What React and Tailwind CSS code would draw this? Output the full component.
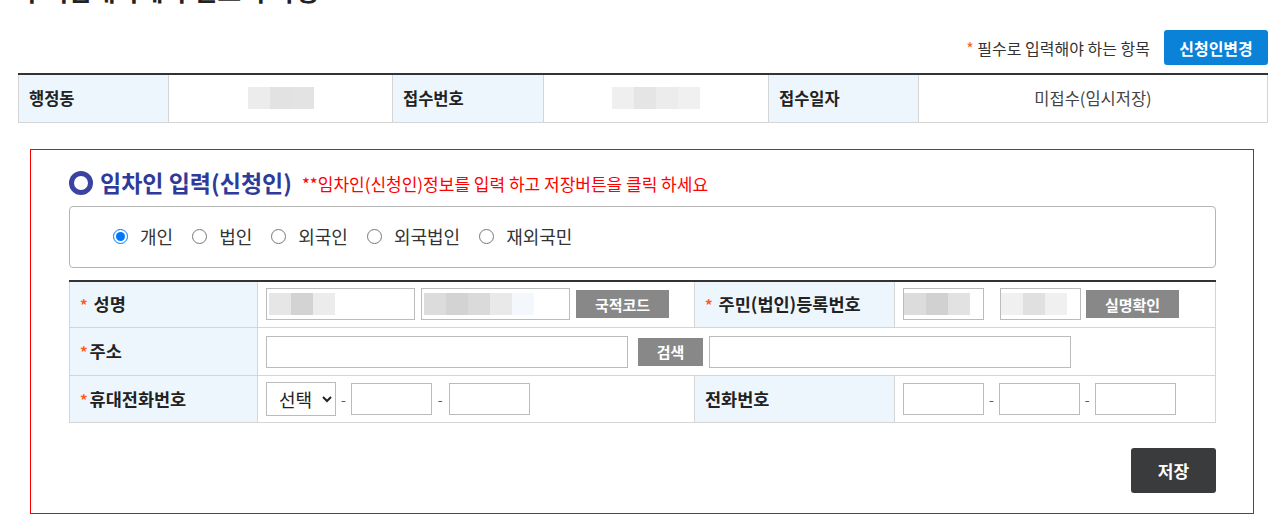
import { useState } from 'react';

const font = { fontFamily: '"Noto Sans CJK KR", "Noto Sans", sans-serif' };

function Blur({ shades }) {
  return (
    <div className="flex h-[22px]">
      {shades.map((c, i) => (
        <div key={i} className="w-[22px] h-[22px]" style={{ backgroundColor: c }} />
      ))}
    </div>
  );
}

function GrayBtn({ children, w }) {
  return (
    <button className={`h-[28px] ${w} bg-[#888888] text-white text-[15px] font-bold leading-none`}>
      {children}
    </button>
  );
}

function Star() {
  return <span className="text-[#ff5a1f] text-[15px] font-bold mr-[2px]">*</span>;
}

export default function App() {
  const [type, setType] = useState('개인');
  const types = ['개인', '법인', '외국인', '외국법인', '재외국민'];

  return (
    <div className="w-[1272px] h-[530px] overflow-hidden bg-white text-[#222]" style={font}>
      <div className="pl-[18px] pr-[4px]">
        <h2 className="mt-[-26px] h-[32px] text-[26px] font-bold text-[#222] leading-[32px] pl-[2px] whitespace-nowrap">
          주택임대차계약 신고서 작성
        </h2>

        <div className="flex items-center justify-end h-[35px] mt-[24px]">
          <span className="text-[16px] text-[#333]">
            <span className="text-[#ff5a1f]">*</span> 필수로 입력해야 하는 항목
          </span>
          <button className="ml-[14px] w-[104px] h-[35px] rounded-[3px] bg-[#0a82d8] text-white text-[16px] font-bold">
            신청인변경
          </button>
        </div>

        <table className="mt-[8px] w-full border-collapse border-t-2 border-t-[#333] text-[16.5px]">
          <tbody>
            <tr className="h-[48px]">
              <th className="w-[150px] bg-[#eef6fd] border border-[#d5d5d5] border-t-0 text-left pl-[10px] font-bold">행정동</th>
              <td className="w-[224px] border border-[#d5d5d5] border-t-0">
                <div className="flex justify-center"><Blur shades={['#ececec', '#e2e2e2', '#e3e3e3']} /></div>
              </td>
              <th className="w-[151px] bg-[#eef6fd] border border-[#d5d5d5] border-t-0 text-left pl-[10px] font-bold">접수번호</th>
              <td className="w-[225px] border border-[#d5d5d5] border-t-0">
                <div className="flex justify-center"><Blur shades={['#efefef', '#e5e5e5', '#ececec', '#f0f0f0']} /></div>
              </td>
              <th className="w-[150px] bg-[#eef6fd] border border-[#d5d5d5] border-t-0 text-left pl-[10px] font-bold">접수일자</th>
              <td className="border border-[#d5d5d5] border-t-0 text-center text-[#444]">미접수(임시저장)</td>
            </tr>
          </tbody>
        </table>
      </div>

      <div className="mt-[26px] ml-[30px] w-[1224px] h-[365px] border border-[#ff0000] pt-[18px] pl-[38px] pr-[37px]">
        <div className="flex items-center h-[30px]">
          <span className="w-[24px] h-[24px] rounded-full border-[5px] border-[#3a43a0]" />
          <span className="ml-[7px] text-[23px] font-bold text-[#2f3b9a]">임차인 입력(신청인)</span>
          <span className="ml-[10px] text-[17px] text-[#ff0000] mt-[3px]">**임차인(신청인)정보를 입력 하고 저장버튼을 클릭 하세요</span>
        </div>

        <div className="mt-[8px] h-[62px] border border-[#b5b5b5] rounded-[4px] flex items-center pl-[43px] gap-[19px] text-[18px] text-[#333]">
          {types.map((t) => (
            <label key={t} className="flex items-center">
              <input
                type="radio"
                name="type"
                checked={type === t}
                onChange={() => setType(t)}
                className="w-[15px] h-[15px] m-0 mr-[12px]"
              />
              {t}
            </label>
          ))}
        </div>

        <table className="mt-[12px] w-full border-collapse border-t-2 border-t-[#333] text-[17.5px]">
          <tbody>
            <tr className="h-[47px]">
              <th className="w-[188px] bg-[#eef6fd] border border-[#d5d5d5] border-t-0 text-left pl-[10px] font-bold">
                <Star /> 성명
              </th>
              <td className="w-[437px] border border-[#d5d5d5] border-t-0 pl-[8px]">
                <div className="flex items-center gap-[6px]">
                  <div className="w-[149px] h-[32px] border border-[#bbb] flex items-center pl-[2px]">
                    <Blur shades={['#e6e6e6', '#d2d3d2', '#ececec']} />
                  </div>
                  <div className="w-[149px] h-[32px] border border-[#bbb] flex items-center pl-[2px]">
                    <Blur shades={['#dcdcdc', '#d3d3d3', '#dadada', '#e9e9e9', '#f4f8fc']} />
                  </div>
                  <GrayBtn w="w-[93px]">국적코드</GrayBtn>
                </div>
              </td>
              <th className="w-[200px] bg-[#eef6fd] border border-[#d5d5d5] border-t-0 text-left pl-[10px] font-bold whitespace-nowrap">
                <Star /> 주민(법인)등록번호
              </th>
              <td className="border border-[#d5d5d5] border-t-0 pl-[8px]">
                <div className="flex items-center">
                  <div className="w-[81px] h-[32px] border border-[#bbb] flex items-center">
                    <Blur shades={['#dcdcdc', '#d1d1d1', '#e2e2e2']} />
                  </div>
                  <div className="ml-[16px] w-[81px] h-[32px] border border-[#bbb] flex items-center">
                    <Blur shades={['#f0f0f0', '#e0e0e0', '#f0f0f0']} />
                  </div>
                  <div className="ml-[5px]"><GrayBtn w="w-[93px]">실명확인</GrayBtn></div>
                </div>
              </td>
            </tr>
            <tr className="h-[48px]">
              <th className="bg-[#eef6fd] border border-[#d5d5d5] text-left pl-[10px] font-bold">
                <Star />주소
              </th>
              <td colSpan={3} className="border border-[#d5d5d5] pl-[8px]">
                <div className="flex items-center">
                  <input className="w-[362px] h-[32px] border border-[#bbb] outline-none" />
                  <div className="ml-[10px]"><GrayBtn w="w-[65px]">검색</GrayBtn></div>
                  <input className="ml-[6px] w-[362px] h-[32px] border border-[#bbb] outline-none" />
                </div>
              </td>
            </tr>
            <tr className="h-[47px]">
              <th className="bg-[#eef6fd] border border-[#d5d5d5] text-left pl-[10px] font-bold">
                <Star />휴대전화번호
              </th>
              <td className="border border-[#d5d5d5] pl-[8px]">
                <div className="flex items-center text-[14px] text-[#555]">
                  <select className="w-[70px] h-[34px] border border-[#bbb] text-[18px] text-[#222] pl-[8px] bg-white">
                    <option>선택</option>
                  </select>
                  <span className="mx-[5px]">-</span>
                  <input className="w-[81px] h-[32px] border border-[#bbb] outline-none" />
                  <span className="mx-[6px]">-</span>
                  <input className="w-[81px] h-[32px] border border-[#bbb] outline-none" />
                </div>
              </td>
              <th className="bg-[#eef6fd] border border-[#d5d5d5] text-left pl-[10px] font-bold">전화번호</th>
              <td className="border border-[#d5d5d5] pl-[8px]">
                <div className="flex items-center text-[14px] text-[#555]">
                  <input className="w-[81px] h-[32px] border border-[#bbb] outline-none" />
                  <span className="mx-[5px]">-</span>
                  <input className="w-[81px] h-[32px] border border-[#bbb] outline-none" />
                  <span className="mx-[5px]">-</span>
                  <input className="w-[81px] h-[32px] border border-[#bbb] outline-none" />
                </div>
              </td>
            </tr>
          </tbody>
        </table>

        <div className="flex justify-end mt-[25px]">
          <button className="w-[85px] h-[45px] rounded-[3px] bg-[#3a3b3c] text-white text-[17px] font-bold">저장</button>
        </div>
      </div>
    </div>
  );
}
